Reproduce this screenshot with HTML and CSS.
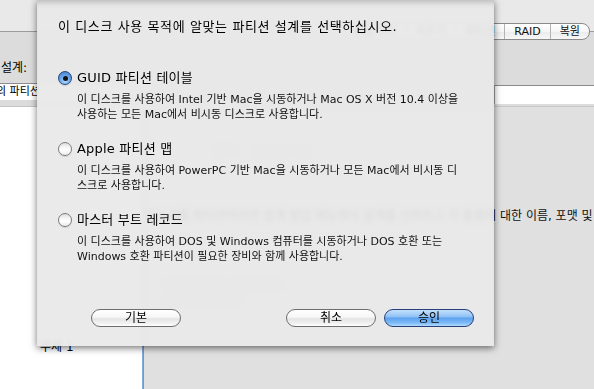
FILE: index.html
```html
<!DOCTYPE html>
<html lang="ko">
<head>
<meta charset="utf-8">
<title>파티션 설계</title>
<link rel="stylesheet" href="styles.css">
</head>
<body>
<div class="window">
  <div class="topbar"></div>
  <div class="tabbox">
    <div class="tabs">
      <span class="tab">응급 처치</span><span class="tab">지우기</span><span class="tab">파티션</span><span class="tab">RAID</span><span class="tab">복원</span>
    </div>
    <div class="scheme-label">설계:</div>
    <div class="fields">
      <div class="popup"><span class="popup-text">의 파티션</span></div>
      <div class="namefield"></div>
    </div>
    <div class="panes">
      <div class="diagram"><span class="vol">무제 1</span></div>
      <div class="divider"></div>
      <div class="info">
        <div class="ghost-row ghost-size"><span>크기:</span><span>232.89 GB</span></div>
        <div class="info-line"><span class="ghost-a">이 디스크를 파티션하려면 설계 팝업 메뉴에서 설계를 선택하고 각 볼륨에</span><span class="info-b">대한 이름, 포맷 및 크기를 설정하십시오.</span></div>
        <div class="ghost-note">새로운 볼륨이 생성됩니다.<br>크기: 232.9 GB</div>
      </div>
    </div>
  </div>
</div>

<div class="sheet">
  <div class="title">이 디스크 사용 목적에 알맞는 파티션 설계를 선택하십시오.</div>
  <div class="options">
    <div class="option">
      <div class="opt-row"><span class="radio on"></span><span class="opt-label">GUID 파티션 테이블</span></div>
      <div class="desc">이 디스크를 사용하여 Intel 기반 Mac을 시동하거나 Mac OS X 버전 10.4 이상을<br>사용하는 모든 Mac에서 비시동 디스크로 사용합니다.</div>
    </div>
    <div class="option">
      <div class="opt-row"><span class="radio"></span><span class="opt-label">Apple 파티션 맵</span></div>
      <div class="desc">이 디스크를 사용하여 PowerPC 기반 Mac을 시동하거나 모든 Mac에서 비시동 디<br>스크로 사용합니다.</div>
    </div>
    <div class="option">
      <div class="opt-row"><span class="radio"></span><span class="opt-label">마스터 부트 레코드</span></div>
      <div class="desc">이 디스크를 사용하여 DOS 및 Windows 컴퓨터를 시동하거나 DOS 호환 또는<br>Windows 호환 파티션이 필요한 장비와 함께 사용합니다.</div>
    </div>
  </div>
  <div class="buttons">
    <button class="btn btn-default-left">기본</button>
    <button class="btn btn-cancel">취소</button>
    <button class="btn btn-ok">승인</button>
  </div>
</div>
</body>
</html>
```
FILE: styles.css
```css
html, body {
  margin: 0;
  padding: 0;
}
body {
  width: 594px;
  height: 389px;
  overflow: hidden;
  position: relative;
  background: #e0e0e0;
  font-family: "DejaVu Sans", "Noto Sans CJK KR", sans-serif;
  color: #000;
}

/* ---------- background window ---------- */
.window {
  display: flex;
  flex-direction: column;
  height: 389px;
}
.topbar {
  height: 31px;
  flex: none;
  background: #e9e9e9;
  border-bottom: 1px solid #9c9c9c;
}
.tabbox {
  flex: 1;
  display: flex;
  flex-direction: column;
  background: #dcdcdc;
  min-height: 0;
}
.tabs {
  align-self: flex-end;
  margin-top: -9px;
  margin-right: 4px;
  display: flex;
  height: 17px;
  border: 1px solid #8a8a8a;
  border-radius: 8px;
  overflow: hidden;
  box-sizing: border-box;
  background: linear-gradient(#ffffff, #f6f6f6 50%, #ececec 55%, #f7f7f7);
}
.tab {
  display: flex;
  align-items: center;
  padding: 0 9px;
  font-size: 11px;
  line-height: 15px;
  border-left: 1px solid #b4b4b4;
  color: #111;
}
.tab:first-child {
  border-left: none;
}
.scheme-label {
  margin-top: 20px;
  padding-left: 1px;
  font-size: 12px;
  line-height: 16px;
  height: 16px;
}
.fields {
  display: flex;
  justify-content: space-between;
  align-items: flex-start;
  margin-top: 7px;
}
.popup {
  width: 130px;
  height: 17px;
  box-sizing: border-box;
  background: #fff;
  border-top: 1px solid #8d8d8d;
  border-right: 1px solid #9d9d9d;
  overflow: hidden;
  white-space: nowrap;
}
.popup-text {
  display: block;
  margin-left: -4px;
  font-size: 11px;
  line-height: 15px;
}
.namefield {
  width: 100px;
  height: 19px;
  margin-top: 2px;
  box-sizing: border-box;
  background: #fff;
  border-top: 1px solid #8a8a8a;
  border-left: 1px solid #a0a0a0;
}
.panes {
  flex: 1;
  display: flex;
  margin-top: 2px;
  min-height: 0;
}
.diagram {
  width: 142px;
  flex: none;
  background: #fff;
  border-top: 1px solid #c4c4c4;
  box-sizing: border-box;
  padding: 229px 0 0 40px;
}
.vol {
  font-size: 12px;
  line-height: 14px;
}
.divider {
  width: 2px;
  flex: none;
  background: linear-gradient(90deg, #8fb4e2, #5f92d3);
}
.info {
  flex: 1;
  min-width: 0;
  overflow: hidden;
  background: #e0e0e0;
  border-top: 1px solid #c8c8c8;
  font-size: 12px;
  line-height: 16px;
  white-space: nowrap;
}
.ghost-row {
  display: flex;
  gap: 14px;
  margin: 37px 0 0 70px;
  color: #c4c4c4;
  font-size: 11px;
}
.info-line {
  display: flex;
  margin-top: 48px;
}
.ghost-a {
  width: 352px;
  flex: none;
  overflow: hidden;
  text-align: right;
  direction: rtl;
  color: #000;
}
.info-b {
  margin-left: 4px;
  color: #111;
}
.ghost-note {
  margin: 54px 0 0 18px;
  color: #c2c2c2;
  font-size: 11px;
}

/* ---------- sheet dialog ---------- */
.sheet {
  position: absolute;
  left: 37px;
  top: 0;
  width: 457px;
  height: 346px;
  box-sizing: border-box;
  padding: 17px 20px 19px 21px;
  display: flex;
  flex-direction: column;
  background: rgba(233, 233, 233, 0.94);
  backdrop-filter: blur(2px);
  box-shadow: 0 2px 7px rgba(0, 0, 0, 0.55), inset 0 7px 6px -5px rgba(0, 0, 0, 0.22);
}
.title {
  font-size: 13px;
  line-height: 20px;
  letter-spacing: 0.6px;
  white-space: nowrap;
}
.options {
  margin-top: 32px;
  display: flex;
  flex-direction: column;
  gap: 18px;
}
.opt-row {
  display: flex;
  align-items: center;
  height: 18px;
  gap: 5px;
}
.opt-label {
  font-size: 13px;
  line-height: 18px;
  letter-spacing: 0.2px;
  white-space: nowrap;
}
.radio {
  width: 14px;
  height: 14px;
  flex: none;
  box-sizing: border-box;
  border-radius: 50%;
  border: 1px solid #7c7c7c;
  background: linear-gradient(#dcdcdc, #f6f6f6 35%, #ffffff 60%, #ececec);
  box-shadow: 0 1px 1px rgba(0, 0, 0, 0.12);
  display: flex;
  align-items: center;
  justify-content: center;
}
.radio.on {
  border-color: #26467e;
  background: radial-gradient(circle at 50% 75%, #b8dcff 0%, #6aa8ec 45%, #3b75c6 100%);
}
.radio.on::after {
  content: "";
  width: 5px;
  height: 5px;
  border-radius: 50%;
  background: #111;
}
.desc {
  margin: 5px 0 0 19px;
  font-size: 11px;
  line-height: 15px;
  white-space: nowrap;
  color: #111;
}
.buttons {
  margin-top: auto;
  display: flex;
  gap: 8px;
  padding-left: 33px;
}
.btn {
  width: 90px;
  height: 18px;
  padding: 0;
  box-sizing: border-box;
  border-radius: 9px;
  border: 1px solid #6e6e6e;
  background: linear-gradient(#ffffff, #f6f6f6 45%, #e4e4e4 55%, #f2f2f2 85%, #ffffff);
  font-family: "DejaVu Sans", "Noto Sans CJK KR", sans-serif;
  font-size: 12px;
  line-height: 16px;
  color: #000;
}
.btn-cancel {
  margin-left: auto;
}
.btn-ok {
  border-color: #26407a;
  background: linear-gradient(#c4e0fc, #92c4f6 40%, #5fa3ef 52%, #7cb9f7 80%, #b2dbff);
}
```
